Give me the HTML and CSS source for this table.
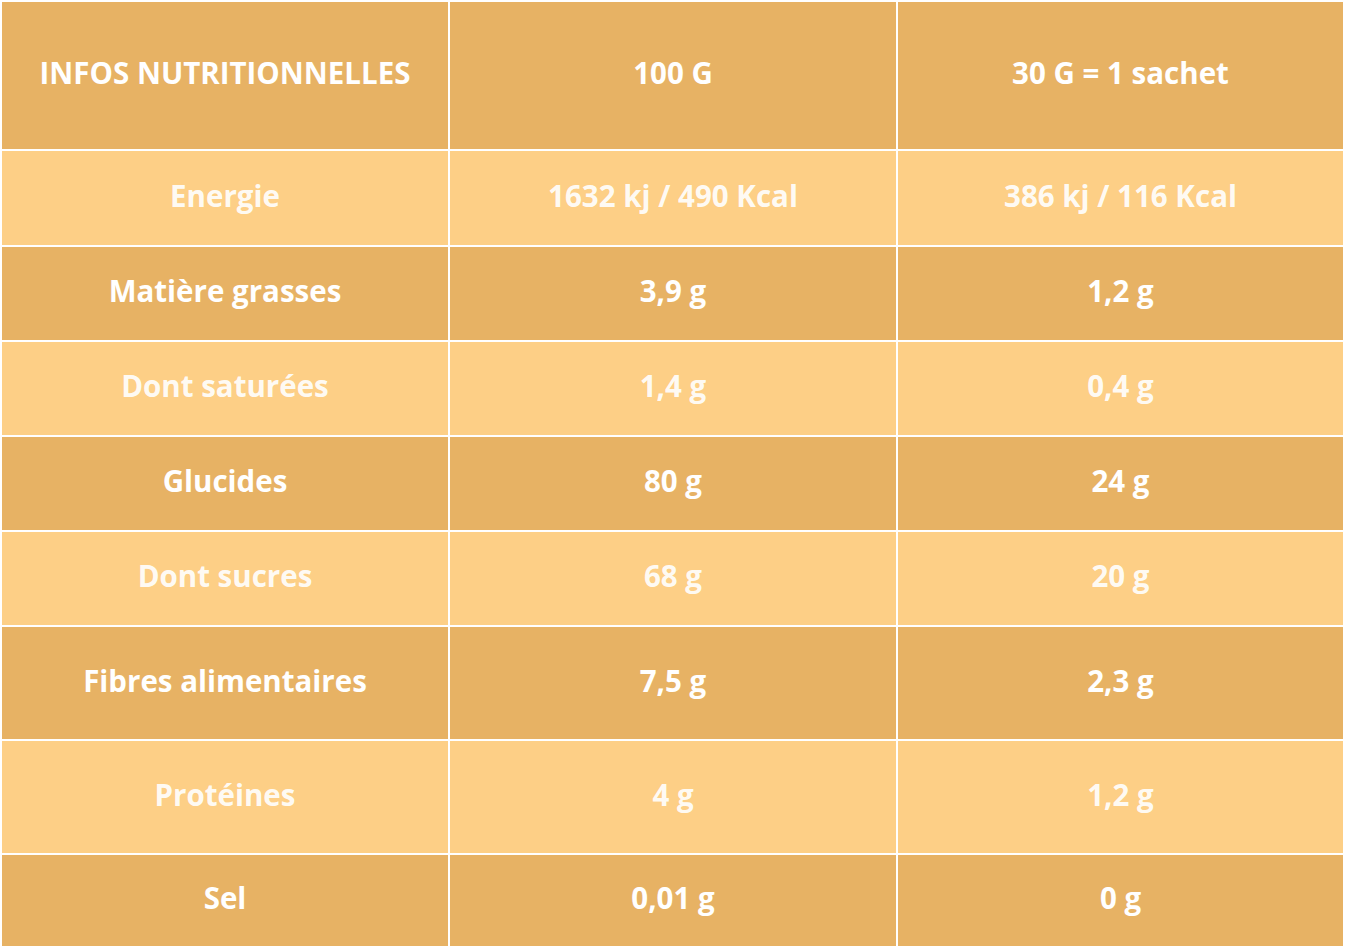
FILE: index.html
```html
<!DOCTYPE html>
<html lang="fr">
<head>
<meta charset="utf-8">
<title>Infos nutritionnelles</title>
<link rel="stylesheet" href="styles.css">
</head>
<body>
<div class="table">
  <div class="cell dark head">INFOS NUTRITIONNELLES</div>
  <div class="cell dark head">100 G</div>
  <div class="cell dark head">30 G = 1 sachet</div>

  <div class="cell light">Energie</div>
  <div class="cell light">1632 kj / 490 Kcal</div>
  <div class="cell light">386 kj / 116 Kcal</div>

  <div class="cell dark">Matière grasses</div>
  <div class="cell dark">3,9 g</div>
  <div class="cell dark">1,2 g</div>

  <div class="cell light">Dont saturées</div>
  <div class="cell light">1,4 g</div>
  <div class="cell light">0,4 g</div>

  <div class="cell dark">Glucides</div>
  <div class="cell dark">80 g</div>
  <div class="cell dark">24 g</div>

  <div class="cell light">Dont sucres</div>
  <div class="cell light">68 g</div>
  <div class="cell light">20 g</div>

  <div class="cell dark">Fibres alimentaires</div>
  <div class="cell dark">7,5 g</div>
  <div class="cell dark">2,3 g</div>

  <div class="cell light">Protéines</div>
  <div class="cell light">4 g</div>
  <div class="cell light">1,2 g</div>

  <div class="cell dark">Sel</div>
  <div class="cell dark">0,01 g</div>
  <div class="cell dark">0 g</div>
</div>
</body>
</html>
```

FILE: styles.css
```css
html, body {
  margin: 0;
  padding: 0;
  background: #fdf4e0;
}

.table {
  width: 1346px;
  height: 948px;
  box-sizing: border-box;
  display: grid;
  grid-template-columns: 446px 446px 445px;
  grid-template-rows: 147px 94px 93px 93px 93px 93px 112px 112px 91px;
  gap: 2px;
  padding: 2px;
  background: #ffffff;
  font-family: "Open Sans", "Liberation Sans", sans-serif;
  font-weight: 700;
  font-size: 29.5px;
  color: #ffffff;
}

.cell {
  display: flex;
  align-items: center;
  justify-content: center;
  text-align: center;
  padding-bottom: 6px;
  box-sizing: border-box;
}

.dark {
  background: #e7b264;
}

.light {
  background: #fdcf86;
  color: rgba(255, 255, 255, 0.93);
}
```
